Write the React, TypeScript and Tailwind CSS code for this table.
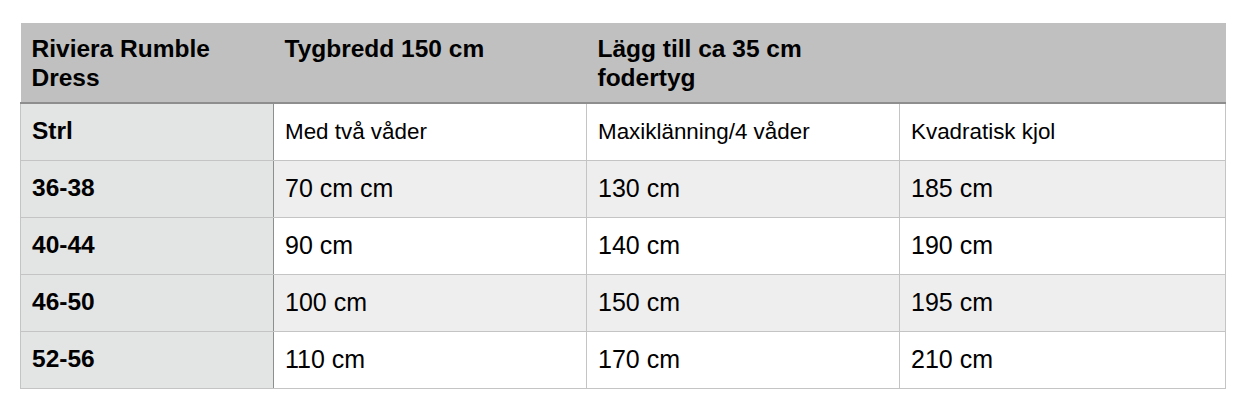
const rows = [
  { size: '36-38', a: '70 cm cm', b: '130 cm', c: '185 cm' },
  { size: '40-44', a: '90 cm', b: '140 cm', c: '190 cm' },
  { size: '46-50', a: '100 cm', b: '150 cm', c: '195 cm' },
  { size: '52-56', a: '110 cm', b: '170 cm', c: '210 cm' },
];

export default function App() {
  return (
    <div
      className="w-[1252px] h-[420px] bg-white pt-[23px] pl-[20px]"
      style={{ fontFamily: '"Liberation Sans", Arial, sans-serif' }}
    >
      <table className="border-collapse table-fixed w-[1205px] text-black">
        <colgroup>
          <col className="w-[253px]" />
          <col className="w-[313px]" />
          <col className="w-[313px]" />
          <col className="w-[326px]" />
        </colgroup>
        <thead>
          <tr className="bg-[#bfc0bf] h-[80px] border-b-2 border-[#8e8e8e]">
            <th className="text-left align-top font-bold text-[24.5px] leading-[29px] px-[11px] pt-[11px]">
              Riviera Rumble
              <br />
              Dress
            </th>
            <th className="text-left align-top font-bold text-[24.5px] leading-[29px] px-[11px] pt-[11px]">
              Tygbredd 150 cm
            </th>
            <th className="text-left align-top font-bold text-[24.5px] leading-[29px] px-[11px] pt-[11px]">
              Lägg till ca 35 cm
              <br />
              fodertyg
            </th>
            <th />
          </tr>
        </thead>
        <tbody>
          <tr className="h-[57px] bg-white">
            <td className="bg-[#e3e4e4] border border-[#c4c4c4] border-r-[#8e8e8e] px-[11px] font-bold text-[24.5px]">
              Strl
            </td>
            <td className="border border-[#c4c4c4] px-[11px] text-[22.4px]">Med två våder</td>
            <td className="border border-[#c4c4c4] px-[11px] text-[22.4px]">Maxiklänning/4 våder</td>
            <td className="border border-[#c4c4c4] px-[11px] text-[22.4px]">Kvadratisk kjol</td>
          </tr>
          {rows.map((r, i) => (
            <tr key={r.size} className={`h-[57px] ${i % 2 === 0 ? 'bg-[#eeeeee]' : 'bg-white'}`}>
              <td className="bg-[#e3e4e4] border border-[#c4c4c4] border-r-[#8e8e8e] px-[11px] font-bold text-[24.5px]">
                {r.size}
              </td>
              <td className="border border-[#c4c4c4] px-[11px] text-[25px]">{r.a}</td>
              <td className="border border-[#c4c4c4] px-[11px] text-[25px]">{r.b}</td>
              <td className="border border-[#c4c4c4] px-[11px] text-[25px]">{r.c}</td>
            </tr>
          ))}
        </tbody>
      </table>
    </div>
  );
}
